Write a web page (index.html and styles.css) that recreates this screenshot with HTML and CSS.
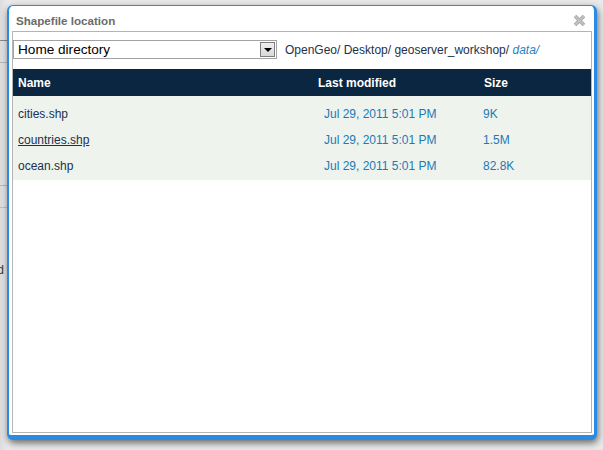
FILE: index.html
```html
<!DOCTYPE html>
<html>
<head>
<meta charset="utf-8">
<link rel="stylesheet" href="styles.css">
</head>
<body>
<div class="backdrop">
  <div class="bg-row r1"></div>
  <div class="bg-row r2"></div>
  <div class="bg-row r3"></div>
  <div class="bg-row r4"></div>
  <div class="bg-text"><span class="clip">Field</span></div>
</div>

<div class="dialog">
  <div class="titlebar">
    <span class="title">Shapefile location</span>
    <svg class="close" width="13" height="13" viewBox="0 0 13 13">
      <path d="M2 2 L11 11 M11 2 L2 11" stroke="#a9a9a9" stroke-width="3.6" stroke-linecap="butt" fill="none"/>
      <path d="M2 2 L11 11 M11 2 L2 11" stroke="#c4c4c4" stroke-width="1.6" fill="none"/>
    </svg>
  </div>
  <div class="panel">
    <div class="toolbar">
      <div class="select">
        <span class="select-text">Home directory</span>
        <span class="select-btn"><span class="tri"></span></span>
      </div>
      <div class="crumbs">OpenGeo/ Desktop/ geoserver_workshop/ <em class="current">data/</em></div>
    </div>
    <div class="grid">
      <div class="head">
        <div class="hc c-name">Name</div>
        <div class="hc c-mod">Last modified</div>
        <div class="hc c-size">Size</div>
      </div>
      <div class="rows">
        <div class="row">
          <div class="cell name">cities.shp</div>
          <div class="cell date">Jul 29, 2011 5:01 PM</div>
          <div class="cell size">9K</div>
        </div>
        <div class="row">
          <div class="cell name"><a class="link">countries.shp</a></div>
          <div class="cell date">Jul 29, 2011 5:01 PM</div>
          <div class="cell size">1.5M</div>
        </div>
        <div class="row">
          <div class="cell name">ocean.shp</div>
          <div class="cell date">Jul 29, 2011 5:01 PM</div>
          <div class="cell size">82.8K</div>
        </div>
      </div>
    </div>
  </div>
</div>
</body>
</html>
```

FILE: styles.css
```css
html, body {
  margin: 0;
  padding: 0;
}
body {
  width: 603px;
  height: 450px;
  overflow: hidden;
  background: #e9e9e9;
  font-family: "Liberation Sans", Arial, sans-serif;
  position: relative;
}

/* background page partly hidden behind the modal */
.backdrop {
  width: 603px;
  height: 450px;
  display: flex;
  flex-direction: column;
  background: linear-gradient(to right, #dcdcdc 0, #e4e4e4 4px, #e9e9e9 8px);
}
.bg-row {
  width: 10px;
  flex: none;
}
.r1 { height: 40px; border-bottom: 1px solid #8a8a8a; }
.r2 { height: 21px; border-bottom: 1px solid #b8b8b8; }
.r3 { height: 122px; border-bottom: 1px solid #b8b8b8; }
.r4 { height: 21px; border-bottom: 1px solid #c0c0c0; }
.bg-text {
  margin-top: 55px;
  width: 4px;
  overflow: hidden;
  font-size: 12px;
  color: #333;
  direction: rtl;
  white-space: nowrap;
}

/* modal window */
.dialog {
  position: absolute;
  left: 7px;
  top: 5px;
  width: 590px;
  height: 435px;
  box-sizing: border-box;
  background: #fff;
  border: 2px solid #2b8be4;
  border-top-width: 1px;
  border-right-width: 3px;
  border-bottom-width: 5px;
  border-radius: 6px;
  padding: 0 2px 2px 3px;
  box-shadow: 1px 3px 7px rgba(0, 0, 0, 0.55);
  display: flex;
  flex-direction: column;
}
.titlebar {
  height: 20px;
  padding-top: 5px;
  box-sizing: content-box;
  display: flex;
  align-items: center;
  justify-content: space-between;
  padding-left: 4px;
  padding-right: 6px;
}
.title {
  font-size: 11.6px;
  font-weight: bold;
  color: #6b6b6b;
  line-height: 20px;
}
.close {
  display: block;
  margin-top: -1px;
}

.panel {
  flex: 1;
  border: 1px solid #b4b4b4;
  display: flex;
  flex-direction: column;
}
.toolbar {
  display: flex;
  align-items: center;
  padding-top: 8px;
  height: 19px;
  box-sizing: content-box;
}
.select {
  width: 264px;
  height: 19px;
  box-sizing: border-box;
  border: 1px solid #a3a3a3;
  display: flex;
  align-items: center;
  justify-content: space-between;
  padding: 0 1px 0 4px;
  background: #fff;
}
.select-text {
  font-size: 13.6px;
  color: #000;
  line-height: 17px;
}
.select-btn {
  width: 15px;
  height: 15px;
  box-sizing: border-box;
  border: 1px solid #7e7e7e;
  background: linear-gradient(#eeeeee, #d9d9d9);
  display: flex;
  align-items: center;
  justify-content: center;
}
.tri {
  width: 0;
  height: 0;
  border-left: 4px solid transparent;
  border-right: 4px solid transparent;
  border-top: 4px solid #000;
  margin-top: 1px;
}
.crumbs {
  margin-left: 8px;
  font-size: 12px;
  color: #1e3146;
  white-space: nowrap;
}
.current {
  color: #2a82c2;
}

.grid {
  margin-top: 10px;
}
.head {
  height: 27px;
  background: #0a2640;
  display: grid;
  grid-template-columns: 300px 166px 1fr;
  align-items: center;
}
.hc {
  color: #fff;
  font-weight: bold;
  font-size: 12px;
  padding-left: 5px;
}
.rows {
  background: #eef3ee;
  padding: 5px 0 1px;
}
.row {
  height: 26px;
  display: grid;
  grid-template-columns: 300px 166px 1fr;
  align-items: center;
  font-size: 12px;
}
.cell.name {
  padding-left: 5px;
  color: #22304e;
}
.link {
  color: #22304e;
  text-decoration: underline;
}
.cell.date {
  padding-left: 11px;
  color: #1d7ab5;
}
.cell.size {
  padding-left: 4px;
  color: #1d7ab5;
}
```
